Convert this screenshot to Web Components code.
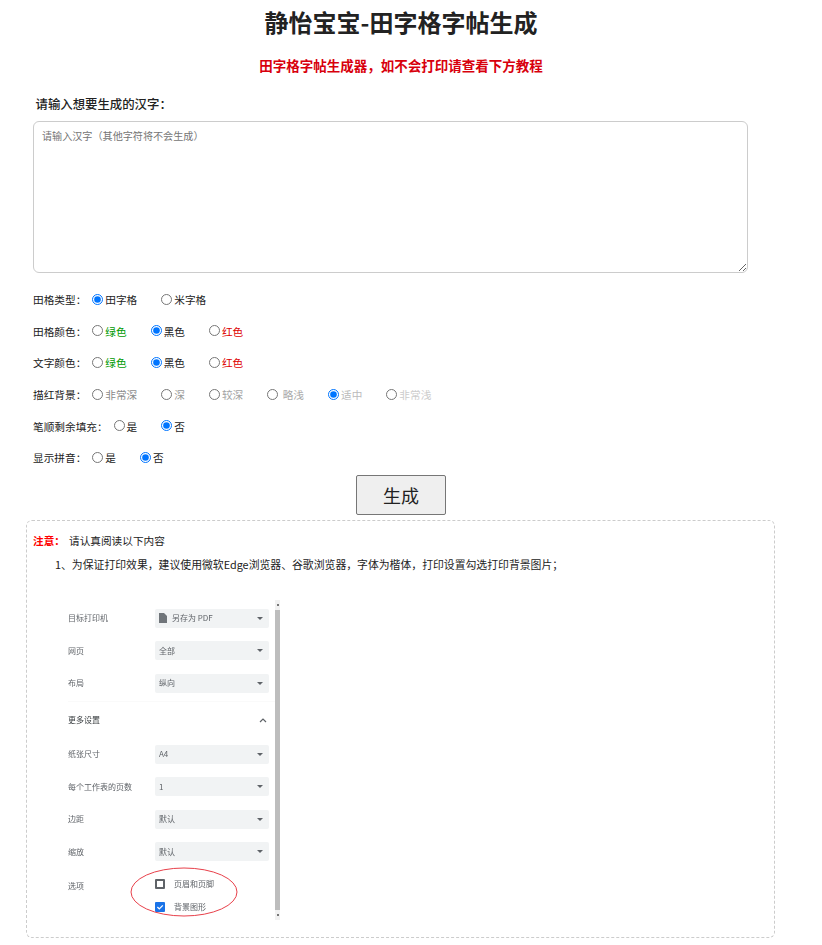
<!DOCTYPE html>
<html lang="zh">
<head>
<meta charset="utf-8">
<title>静怡宝宝-田字格字帖生成</title>
<style>
  html, body { margin: 0; background: #fff; }
  body { font-family: "Noto Sans", "Noto Sans CJK SC", sans-serif; color: #222; }
</style>
</head>
<body>
<copybook-app></copybook-app>

<script>
const FONT = `"Noto Sans CJK SC", "Noto Sans", sans-serif`;

// one row of radios, items come from the options attribute: "text|color|checked"
class RadioRow extends HTMLElement {
  constructor() {
    super();
    this.attachShadow({ mode: "open" });
  }

  connectedCallback() {
    const name = this.getAttribute("name");
    const items = this.getAttribute("options").split(",").map((o) => o.split("|"));
    this.shadowRoot.innerHTML = `
      <style>
        :host { display: flex; align-items: center; height: 31.6px; font: 10.67px ${FONT}; color: #222; }
        .title { margin-right: 6px; white-space: nowrap; min-width: 47px; }
        label { display: flex; align-items: center; margin-right: 24px; white-space: nowrap; }
        label span { white-space: pre; }
        input { width: 11px; height: 11px; margin: 0 2px 1px 0; flex: none; }
      </style>
      <span class="title">${this.getAttribute("label")}</span>
      ${items
        .map(
          ([text, color, checked]) =>
            `<label style="color:${color || "inherit"}"><input type="radio" name="${name}" ${checked ? "checked" : ""}><span>${text}</span></label>`
        )
        .join("")}
    `;
  }
}

// a setting line in the print dialog picture
class PrintRow extends HTMLElement {
  constructor() {
    super();
    this.attachShadow({ mode: "open" });
  }

  connectedCallback() {
    const file = this.hasAttribute("file")
      ? `<svg width="8" height="10" viewBox="0 0 8 10"><path d="M0 0h5l3 3v7H0z" fill="#70757a"/></svg>`
      : "";
    this.shadowRoot.innerHTML = `
      <style>
        :host { display: flex; align-items: center; height: 32.4px; }
        .name { width: 87px; font-size: 8px; color: #5f6368; white-space: nowrap; }
        .select { width: 114px; height: 19px; box-sizing: border-box; padding: 0 6px 0 4px; border-radius: 2px;
          background: #f1f3f4; display: flex; align-items: center; gap: 5px; font-size: 8px; color: #5f6368; }
        .value { flex: 1; }
        .arrow { width: 0; height: 0; border: 3px solid transparent; border-top: 3.5px solid #5f6368; border-bottom: 0; }
      </style>
      <span class="name">${this.getAttribute("label")}</span>
      <div class="select">${file}<span class="value">${this.getAttribute("value")}</span><span class="arrow"></span></div>
    `;
  }
}

class PrintShot extends HTMLElement {
  constructor() {
    super();
    this.attachShadow({ mode: "open" });
    this.shadowRoot.innerHTML = `
      <style>
        :host { display: block; position: relative; width: 225px; height: 320px; font-family: ${FONT}; }
        .panel { width: 220px; padding: 0 0 0 13px; box-sizing: border-box; filter: blur(0.45px); }
        .rows { padding-top: 2.5px; }
        .more { display: flex; justify-content: space-between; align-items: center; height: 36px; margin-top: 2px;
          border-top: 1px solid #fafafa; font-size: 8px; color: #3c4043; padding-right: 8px; }
        .opts { display: grid; grid-template-columns: 87px 1fr; font-size: 8px; color: #5f6368; margin-top: 5px; }
        .opt { display: flex; align-items: center; gap: 9px; height: 23px; }
        .box { width: 10px; height: 10px; box-sizing: border-box; border: 2px solid #5f6368; border-radius: 1px; }
        .box.on { border: 0; background: #1a73e8; display: flex; }
        .bar { position: absolute; left: 220px; top: 0; width: 5px; height: 320px; background: #f1f1f1; }
        .bar i { display: block; margin-top: 10px; height: 300px; background: #bdbdbd; }
        .bar::before, .bar::after { content: ""; position: absolute; left: 1.5px; width: 2px; height: 2px; background: #777; }
        .bar::before { top: 4px; }
        .bar::after { bottom: 4px; }
        .ring { position: absolute; left: 75px; top: 267px; }
      </style>
      <div class="panel">
        <div class="rows">
          <print-row label="目标打印机" value="另存为 PDF" file></print-row>
          <print-row label="网页" value="全部"></print-row>
          <print-row label="布局" value="纵向"></print-row>
        </div>
        <div class="more">
          <span>更多设置</span>
          <svg width="8" height="5" viewBox="0 0 8 5"><path d="M1 4l3-3 3 3" fill="none" stroke="#5f6368" stroke-width="1.2"/></svg>
        </div>
        <print-row label="纸张尺寸" value="A4"></print-row>
        <print-row label="每个工作表的页数" value="1"></print-row>
        <print-row label="边距" value="默认"></print-row>
        <print-row label="缩放" value="默认"></print-row>
        <div class="opts">
          <span style="padding-top:5px">选项</span>
          <div>
            <div class="opt"><span class="box"></span>页眉和页脚</div>
            <div class="opt"><span class="box on"><svg width="10" height="10" viewBox="0 0 10 10"><path d="M2.4 5l1.9 1.9L7.8 3.4" fill="none" stroke="#fff" stroke-width="1.3"/></svg></span>背景图形</div>
          </div>
        </div>
      </div>
      <div class="bar"><i></i></div>
      <svg class="ring" width="108" height="50" viewBox="0 0 108 50"><ellipse cx="54" cy="25" rx="53" ry="24" fill="none" stroke="#e8404a" stroke-width="1"/></svg>
    `;
  }
}

class NoticeBox extends HTMLElement {
  constructor() {
    super();
    this.attachShadow({ mode: "open" });
    this.shadowRoot.innerHTML = `
      <style>
        :host { display: block; box-sizing: border-box; width: 749px; height: 418px; margin: 5px 0 0 26px;
          padding: 12px 6px 0; border: 1px dashed #ccc; border-radius: 6px; font: 10.67px/16px ${FONT}; color: #222; }
        .head { display: flex; gap: 4px; }
        b { color: #f00; }
        p { margin: 7px 0 0 22px; font-size: 10.85px; }
        print-shot { margin: 28px 0 0 22px; }
      </style>
      <div class="head"><b>注意：</b><span>请认真阅读以下内容</span></div>
      <p>1、为保证打印效果，建议使用微软Edge浏览器、谷歌浏览器，字体为楷体，打印设置勾选打印背景图片；</p>
      <print-shot></print-shot>
    `;
  }
}

class CopybookApp extends HTMLElement {
  constructor() {
    super();
    this.attachShadow({ mode: "open" });
    this.shadowRoot.innerHTML = `
      <style>
        :host { display: block; width: 802px; font-family: ${FONT}; color: #222; }
        h1 { margin: 0; padding-top: 4px; text-align: center; font-size: 24px; line-height: 35px; font-weight: 700; }
        h2 { margin: 16px 0 0; text-align: center; font-size: 13.5px; line-height: 20px; font-weight: 700; color: #d8000c; }
        .ask { margin: 19px 0 0 35.5px; font-size: 12.4px; line-height: 20px; font-weight: 500; }
        textarea { display: block; box-sizing: border-box; width: 715px; height: 152px; margin: 7px 0 0 33px; padding: 8px;
          border: 1px solid #ccc; border-radius: 6px; outline: 0; font: 10.1px/12px ${FONT}; }
        textarea::placeholder { color: #757575; }
        .rows { margin: 11px 0 0 33px; }
        .go { display: flex; justify-content: center; }
        button { width: 90px; height: 40px; margin-top: 1px; border: 1px solid #767676; border-radius: 2px; background: #efefef;
          font: 18px ${FONT}; color: #222; padding: 0; }
      </style>
      <h1>静怡宝宝-田字格字帖生成</h1>
      <h2>田字格字帖生成器，如不会打印请查看下方教程</h2>
      <div class="ask">请输入想要生成的汉字：</div>
      <textarea placeholder="请输入汉字（其他字符将不会生成）"></textarea>
      <div class="rows">
        <radio-row name="type" label="田格类型：" options="田字格||1,米字格"></radio-row>
        <radio-row name="grid" label="田格颜色：" options="绿色|#090,黑色||1,红色|#d00"></radio-row>
        <radio-row name="text" label="文字颜色：" options="绿色|#090,黑色||1,红色|#d00"></radio-row>
        <radio-row name="bg" label="描红背景：" options="非常深|#8a8a8a,深|#999,较深|#a3a3a3, 略浅|#aaa,适中|#bbb|1,非常浅|#ccc"></radio-row>
        <radio-row name="fill" label="笔顺剩余填充：" options="是,否||1"></radio-row>
        <radio-row name="py" label="显示拼音：" options="是,否||1"></radio-row>
      </div>
      <div class="go"><button>生成</button></div>
      <notice-box></notice-box>
    `;
  }
}

customElements.define("radio-row", RadioRow);
customElements.define("print-row", PrintRow);
customElements.define("print-shot", PrintShot);
customElements.define("notice-box", NoticeBox);
customElements.define("copybook-app", CopybookApp);
</script>
</body>
</html>
